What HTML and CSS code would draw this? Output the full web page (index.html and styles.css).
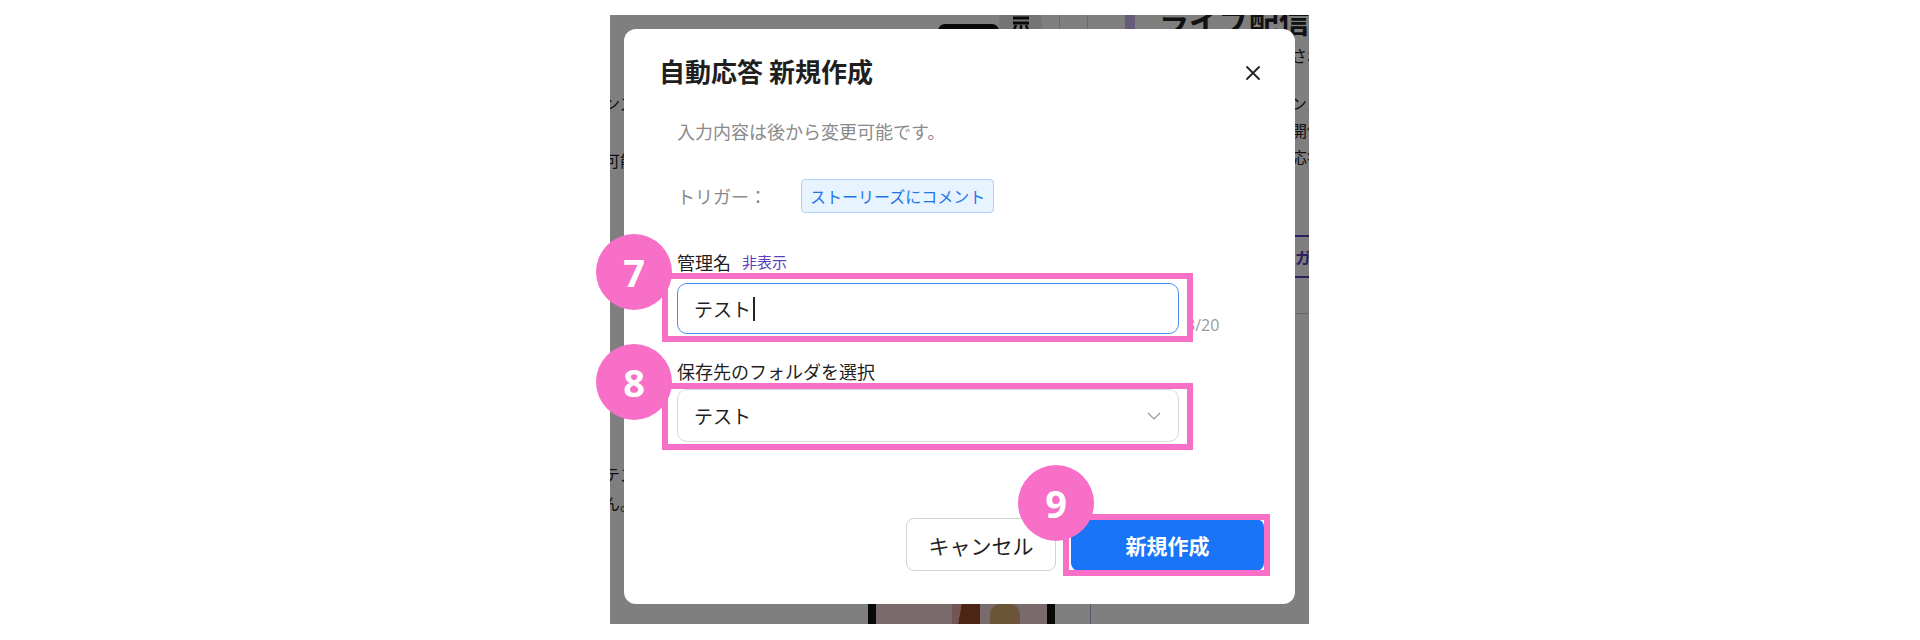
FILE: index.html
```html
<!DOCTYPE html>
<html lang="ja">
<head>
<meta charset="utf-8">
<title>自動応答 新規作成</title>
<link rel="stylesheet" href="styles.css">
</head>
<body>
<div class="stage">
  <div class="bg-page">
    <div class="bg-top">
      <div class="bg-darkbar"></div>
      <div class="bg-avatar">
        <svg width="24" height="16" viewBox="0 0 24 16"><path d="M4 3h16M4 8h16" stroke="#111" stroke-width="3"/><path d="M7 10l-2 5M12 10v5M17 10l2 5" stroke="#111" stroke-width="2.5"/></svg>
      </div>
      <div class="bg-sep"></div>
      <div class="bg-sep bg-sep-2"></div>
      <div class="bg-purple-sq"></div>
      <div class="bg-heading">ライブ配信</div>
    </div>
    <div class="bg-body">
      <div class="bg-left">
        <div class="bg-line l1">ンスタグラム</div>
        <div class="bg-line l2">可能です</div>
        <div class="bg-rule r1"></div>
        <div class="bg-rule r2"></div>
        <div class="bg-line l3">テスト</div>
        <div class="bg-line l4">ん。</div>
      </div>
      <div class="bg-center"></div>
      <div class="bg-right">
        <div class="bg-line r-l1">されます</div>
        <div class="bg-line r-l2">ンスタ</div>
        <div class="bg-line r-l3">開催中</div>
        <div class="bg-line r-l4">応答を</div>
        <div class="bg-tab">ガイド</div>
        <div class="bg-rule r3"></div>
      </div>
    </div>
    <div class="bg-bottom">
      <div class="bg-phone">
        <div class="ph-a"></div>
        <div class="ph-b"></div>
        <div class="ph-c"></div>
      </div>
      <div class="bg-vline"></div>
    </div>
  </div>

  <div class="overlay"></div>

  <div class="modal">
    <div class="modal-header">
      <h2 class="modal-title">自動応答 新規作成</h2>
      <button class="modal-close" aria-label="閉じる">
        <svg width="16" height="16" viewBox="0 0 16 16"><path d="M2 2L14 14M14 2L2 14" stroke="#222" stroke-width="1.8" stroke-linecap="round"/></svg>
      </button>
    </div>
    <div class="modal-body">
      <p class="hint">入力内容は後から変更可能です。</p>
      <div class="trigger-row">
        <span class="trigger-label">トリガー：</span>
        <span class="tag">ストーリーズにコメント</span>
      </div>
      <div class="field field-name">
        <div class="field-label">管理名<span class="toggle-link">非表示</span></div>
        <div class="input-row">
          <div class="text-input">テスト<span class="caret"></span></div>
          <span class="counter">3/20</span>
        </div>
      </div>
      <div class="field field-folder">
        <div class="field-label">保存先のフォルダを選択</div>
        <div class="select">
          <span>テスト</span>
          <svg width="14" height="8" viewBox="0 0 14 8"><path d="M1 1L7 7L13 1" fill="none" stroke="#9a9a9a" stroke-width="1.2"/></svg>
        </div>
      </div>
    </div>
    <div class="modal-footer">
      <button class="btn btn-default">キャンセル</button>
      <button class="btn btn-primary">新規作成</button>
    </div>
  </div>

  <div class="mark-box box-name"></div>
  <div class="mark-box box-folder"></div>
  <div class="mark-box box-create"></div>
  <div class="mark-num num-7">7</div>
  <div class="mark-num num-8">8</div>
  <div class="mark-num num-9">9</div>
</div>
</body>
</html>
```

FILE: styles.css
```css
* { box-sizing: border-box; }

html, body {
  margin: 0;
  padding: 0;
  background: #ffffff;
}

body {
  width: 1920px;
  height: 640px;
  overflow: hidden;
  font-family: "Noto Sans CJK JP", "Noto Sans", sans-serif;
  color: #222;
}

.stage {
  position: relative;
  width: 699px;
  height: 609px;
  margin: 15px 0 0 610px;
}

/* ---------- background page (dimmed) ---------- */
.bg-page {
  width: 100%;
  height: 100%;
  overflow: hidden;
  background: #fff;
  display: flex;
  flex-direction: column;
}

.bg-top {
  height: 24px;
  flex: none;
  display: flex;
  align-items: flex-start;
  padding-left: 328px;
}

.bg-darkbar {
  width: 79px;
  height: 14px;
  margin-top: 9px;
  background: #111;
  border-radius: 7px;
}

.bg-avatar {
  width: 56px;
  height: 44px;
  margin-top: -14px;
  border-radius: 50%;
  background: #e8e8e8;
  display: flex;
  justify-content: center;
  align-items: flex-end;
  padding-bottom: 14px;
}

.bg-sep {
  width: 1px;
  height: 24px;
  margin-left: 17px;
  background: #d4d4d4;
}

.bg-sep-2 { margin-left: 27px; }

.bg-purple-sq {
  width: 13px;
  height: 16px;
  margin-left: 37px;
  background: #cdb9ee;
}

.bg-heading {
  margin-left: 24px;
  margin-top: -10px;
  font-size: 30px;
  font-weight: 700;
  line-height: 1;
  white-space: nowrap;
  color: #222;
}

.bg-body {
  height: 565px;
  flex: none;
  display: flex;
}

.bg-left {
  width: 200px;
  flex: none;
  margin-left: -6px;
  font-size: 16px;
}

.bg-center { flex: 1; }

.bg-right {
  width: 160px;
  flex: none;
  margin-right: -142px;
  font-size: 16px;
}

.bg-line {
  line-height: 24px;
  height: 24px;
  white-space: nowrap;
  color: #222;
}

.l1 { margin-top: 52px; }
.l2 { margin-top: 33px; }
.bg-rule { height: 1px; background: #cfcfcf; }
.r1 { margin-top: 98px; }
.r2 { margin-top: 29px; }
.l3 { margin-top: 161px; }
.l4 { margin-top: 5px; }

.r-l1 { margin-top: 4px; }
.r-l2 { margin-top: 24px; }
.r-l3 { margin-top: 3px; }
.r-l4 { margin-top: 3px; }

.bg-tab {
  margin-top: 66px;
  height: 43px;
  line-height: 40px;
  border-top: 2px solid #5b3fc0;
  border-bottom: 2px solid #5b3fc0;
  color: #5b3fc0;
  font-weight: 700;
  padding-left: 4px;
}

.r3 { margin-top: 35px; }

.bg-bottom {
  flex: 1;
  display: flex;
}

.bg-phone {
  width: 187px;
  margin-left: 258px;
  border-left: 8px solid #111;
  border-right: 8px solid #111;
  background: #f2d6d6;
  display: flex;
  align-items: stretch;
}

.ph-a { width: 76px; }
.ph-b { width: 28px; background: linear-gradient(100deg, #e8aaaa 30%, #9a4a2a 32%); }
.ph-c { width: 30px; margin-left: 10px; background: #d6a86e; border-radius: 10px 10px 0 0; }

.bg-vline {
  width: 1px;
  margin-left: 35px;
  background: #b9a8e0;
}

.overlay {
  position: absolute;
  inset: 0;
  background: rgba(0, 0, 0, 0.5);
}

/* ---------- modal ---------- */
.modal {
  position: absolute;
  left: 14px;
  top: 14px;
  width: 671px;
  height: 575px;
  background: #fff;
  border-radius: 12px;
  padding: 24px 31px 33px 35px;
  display: flex;
  flex-direction: column;
}

.modal-header {
  height: 36px;
  display: flex;
  align-items: center;
  justify-content: space-between;
}

.modal-title {
  margin: 0;
  font-size: 26px;
  line-height: 36px;
  font-weight: 700;
  color: #1f1f1f;
}

.modal-close {
  border: 0;
  background: none;
  padding: 0;
  width: 16px;
  height: 16px;
  margin: 4px 3px 0 0;
  display: flex;
}

.modal-body {
  padding-left: 18px;
  margin-top: 29px;
}

.hint {
  margin: 0;
  font-size: 18px;
  line-height: 26px;
  color: #8a8a8a;
}

.trigger-row {
  margin-top: 35px;
  height: 34px;
  display: flex;
  align-items: center;
}

.trigger-label {
  width: 124px;
  font-size: 18px;
  color: #8a8a8a;
}

.tag {
  height: 34px;
  padding: 0 8px;
  display: flex;
  align-items: center;
  font-size: 16px;
  color: #1f74e8;
  background: #e7f3ff;
  border: 1px solid #a9d2fb;
  border-radius: 4px;
}

.field-name { margin-top: 36px; }
.field-folder { margin-top: 24px; }

.field-label {
  font-size: 18px;
  line-height: 26px;
  color: #1f1f1f;
  display: flex;
  align-items: center;
}

.toggle-link {
  margin-left: 11px;
  font-size: 15px;
  color: #5b3fc0;
}

.input-row {
  margin-top: 8px;
  display: flex;
}

.text-input {
  width: 502px;
  height: 51px;
  border: 1.5px solid #4a8ef0;
  border-radius: 10px;
  padding-left: 16px;
  display: flex;
  align-items: center;
  font-size: 19px;
  color: #1f1f1f;
}

.caret {
  width: 1.5px;
  height: 24px;
  margin-left: 2px;
  background: #222;
}

.counter {
  align-self: flex-end;
  margin: 0 0 0 7px;
  font-family: "Open Sans", "Noto Sans", sans-serif;
  font-size: 16px;
  line-height: 20px;
  color: #9a9a9a;
  position: relative;
  top: 1px;
}

.field-folder .field-label { margin-bottom: 5px; }

.select {
  width: 502px;
  height: 53px;
  border: 1px solid #d9d9d9;
  border-radius: 10px;
  padding: 0 17px 0 16px;
  display: flex;
  align-items: center;
  justify-content: space-between;
  font-size: 19px;
  color: #1f1f1f;
}

.modal-footer {
  margin-top: auto;
  display: flex;
  justify-content: flex-end;
  align-items: center;
  gap: 15px;
}

.btn {
  font-family: "Noto Sans CJK JP", sans-serif;
  font-size: 21px;
  border-radius: 8px;
  display: flex;
  align-items: center;
  justify-content: center;
  padding: 0;
}

.btn-default {
  width: 150px;
  height: 53px;
  background: #fff;
  border: 1px solid #d3d3d3;
  color: #1f1f1f;
}

.btn-primary {
  width: 193px;
  height: 52px;
  background: #1a74f7;
  border: 0;
  color: #fff;
  font-weight: 700;
}

/* ---------- annotations ---------- */
.mark-box {
  position: absolute;
  border: 6px solid #f76fc6;
}

.box-name { left: 52px; top: 258px; width: 531px; height: 69px; }
.box-folder { left: 52px; top: 368px; width: 531px; height: 67px; }
.box-create { left: 453px; top: 499px; width: 207px; height: 62px; }

.mark-num {
  position: absolute;
  width: 76px;
  height: 76px;
  border-radius: 50%;
  background: #f76fc6;
  color: #fff;
  display: flex;
  align-items: center;
  justify-content: center;
  font-family: "Noto Sans", sans-serif;
  font-size: 38px;
  font-weight: 700;
}

.num-7 { left: -14px; top: 219px; }
.num-8 { left: -14px; top: 329px; }
.num-9 { left: 408px; top: 450px; }
```
